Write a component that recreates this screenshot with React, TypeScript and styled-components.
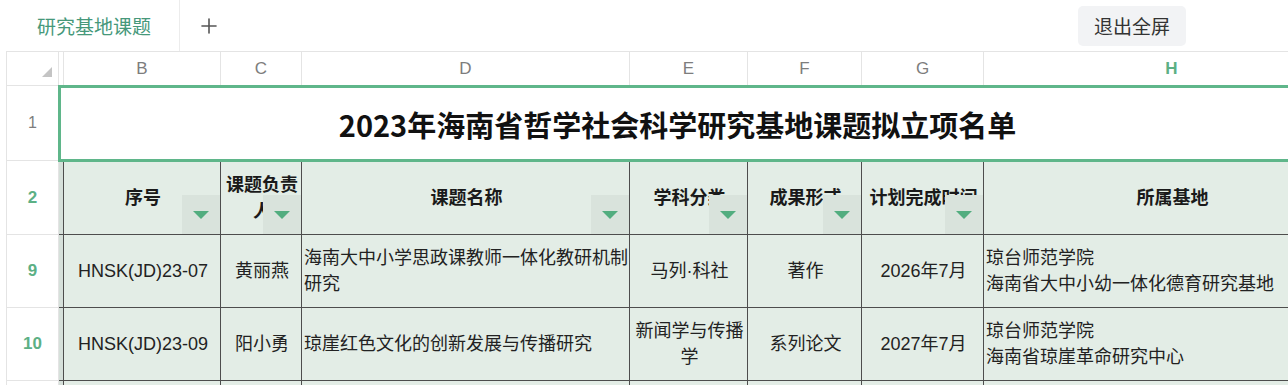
import React from 'react';
import styled, { createGlobalStyle, css } from 'styled-components';
import { Plus } from 'lucide-react';

const GlobalStyle = createGlobalStyle`
  html, body {
    margin: 0;
    padding: 0;
    background: #ffffff;
    overflow: hidden;
  }
  body {
    font-family: "Liberation Sans", "Noto Sans CJK SC", sans-serif;
    color: #222;
  }
  * {
    box-sizing: border-box;
  }
`;

const COLS = [52, 5, 157, 81, 328, 118, 114, 122, 376];

const Page = styled.div`
  width: 1288px;
  height: 385px;
  overflow: hidden;
`;

// Top bar with the sheet tab and the exit button
const TabBar = styled.div`
  height: 51px;
  display: flex;
  align-items: center;
`;

const Tab = styled.div`
  width: 180px;
  height: 100%;
  display: flex;
  align-items: center;
  padding-left: 37px;
  font-size: 19px;
  color: #46987a;
  border-right: 1px solid #ececec;
`;

const AddButton = styled.div`
  width: 58px;
  height: 100%;
  display: flex;
  align-items: center;
  justify-content: center;
  color: #555;
`;

const Spacer = styled.div`
  flex: 1;
`;

const ExitButton = styled.div`
  width: 108px;
  height: 40px;
  margin-right: 102px;
  border-radius: 5px;
  background: #f2f3f5;
  color: #333;
  font-size: 19px;
  display: flex;
  align-items: center;
  justify-content: center;
`;

// Spreadsheet area
const SheetViewport = styled.div`
  margin-left: 6px;
  border-top: 1px solid #e4e4e4;
  border-left: 1px solid #e4e4e4;
  overflow: hidden;
  height: 334px;
`;

const Grid = styled.div`
  display: grid;
  grid-template-columns: ${COLS.map((c) => `${c}px`).join(' ')};
  grid-template-rows: 34px 75px 74px 73px 73px 74px;
  width: ${COLS.reduce((a, b) => a + b, 0)}px;
`;

const Corner = styled.div`
  position: relative;
  border-right: 1px solid #e4e4e4;
  border-bottom: 1px solid #e4e4e4;

  &::after {
    content: '';
    position: absolute;
    right: 6px;
    bottom: 8px;
    width: 0;
    height: 0;
    border-left: 10px solid transparent;
    border-bottom: 10px solid #c4c4c4;
  }
`;

const ColHead = styled.div<{ $active?: boolean }>`
  display: flex;
  align-items: center;
  justify-content: center;
  font-size: 17px;
  color: #7d7d7d;
  border-right: 1px solid #e4e4e4;
  border-bottom: 1px solid #e4e4e4;
  ${(p) =>
    p.$active &&
    css`
      color: #5cb085;
      font-weight: bold;
    `}
`;

const RowHead = styled.div<{ $active?: boolean }>`
  display: flex;
  align-items: center;
  justify-content: center;
  font-size: 16px;
  color: #7d7d7d;
  border-right: 1px solid #e4e4e4;
  border-bottom: 1px solid #e4e4e4;
  ${(p) =>
    p.$active &&
    css`
      color: #5cb085;
      font-weight: bold;
      font-size: 17px;
    `}
`;

const HiddenCol = styled.div`
  background: #d6e0da;
  border-right: 1px solid #4d4d4d;
  border-bottom: 1px solid #4d4d4d;
`;

const TitleCell = styled.div`
  grid-column: 2 / -1;
  position: relative;
  z-index: 1;
  display: flex;
  align-items: center;
  justify-content: center;
  padding-right: 64px;
  background: #fff;
  font-family: "Noto Sans CJK SC", "Liberation Sans", sans-serif;
  font-size: 29px;
  font-weight: bold;
  color: #111;
  box-shadow: 0 0 0 1px #5fb68a, inset 0 0 0 2px #5fb68a;
`;

const Cell = styled.div<{ $align?: 'left' | 'center'; $header?: boolean }>`
  position: relative;
  display: flex;
  align-items: center;
  justify-content: ${(p) => (p.$align === 'left' ? 'flex-start' : 'center')};
  text-align: ${(p) => (p.$align === 'left' ? 'left' : 'center')};
  padding: 0 0 0 2px;
  background: #e3ede6;
  border-right: 1px solid #4d4d4d;
  border-bottom: 1px solid #4d4d4d;
  font-size: 18px;
  line-height: 26px;
  color: #222;
  word-break: break-all;
  overflow: hidden;
  ${(p) =>
    p.$header &&
    css`
      font-weight: bold;
      color: #1a1a1a;
    `}
`;

const FilterButton = styled.div`
  position: absolute;
  right: 0;
  bottom: 0;
  width: 38px;
  height: 39px;
  background: #d9e3dc;
  display: flex;
  align-items: center;
  justify-content: center;

  &::after {
    content: '';
    width: 0;
    height: 0;
    border-left: 8px solid transparent;
    border-right: 8px solid transparent;
    border-top: 8px solid #52ad7f;
  }
`;

type Align = 'left' | 'center';

const headers: { label: string; filter: boolean }[] = [
  { label: '序号', filter: true },
  { label: '课题负责人', filter: true },
  { label: '课题名称', filter: true },
  { label: '学科分类', filter: true },
  { label: '成果形式', filter: true },
  { label: '计划完成时间', filter: true },
  { label: '所属基地', filter: false },
];

const aligns: Align[] = ['center', 'center', 'left', 'center', 'center', 'center', 'left'];

const rows: { num: string; cells: string[][] }[] = [
  {
    num: '9',
    cells: [
      ['HNSK(JD)23-07'],
      ['黄丽燕'],
      ['海南大中小学思政课教师一体化教研机制研究'],
      ['马列·科社'],
      ['著作'],
      ['2026年7月'],
      ['琼台师范学院', '海南省大中小幼一体化德育研究基地'],
    ],
  },
  {
    num: '10',
    cells: [
      ['HNSK(JD)23-09'],
      ['阳小勇'],
      ['琼崖红色文化的创新发展与传播研究'],
      ['新闻学与传播学'],
      ['系列论文'],
      ['2027年7月'],
      ['琼台师范学院', '海南省琼崖革命研究中心'],
    ],
  },
];

const letters = ['B', 'C', 'D', 'E', 'F', 'G', 'H'];

export default function App() {
  return (
    <Page>
      <GlobalStyle />
      <TabBar>
        <Tab>研究基地课题</Tab>
        <AddButton>
          <Plus size={24} strokeWidth={1.6} />
        </AddButton>
        <Spacer />
        <ExitButton>退出全屏</ExitButton>
      </TabBar>

      <SheetViewport>
        <Grid>
          {/* column letters */}
          <Corner />
          <ColHead />
          {letters.map((l) => (
            <ColHead key={l} $active={l === 'H'}>
              {l}
            </ColHead>
          ))}

          {/* row 1: title */}
          <RowHead>1</RowHead>
          <TitleCell>2023年海南省哲学社会科学研究基地课题拟立项名单</TitleCell>

          {/* row 2: headers */}
          <RowHead $active>2</RowHead>
          <HiddenCol />
          {headers.map((h) => (
            <Cell key={h.label} $header>
              <span>{h.label}</span>
              {h.filter && <FilterButton />}
            </Cell>
          ))}

          {rows.map((r) => (
            <React.Fragment key={r.num}>
              <RowHead $active>{r.num}</RowHead>
              <HiddenCol />
              {r.cells.map((lines, i) => (
                <Cell key={i} $align={aligns[i]}>
                  <div>
                    {lines.map((line) => (
                      <div key={line}>{line}</div>
                    ))}
                  </div>
                </Cell>
              ))}
            </React.Fragment>
          ))}

          {/* next row, cut off by the window */}
          <RowHead />
          <HiddenCol />
          {letters.map((l) => (
            <Cell key={`x-${l}`} />
          ))}
        </Grid>
      </SheetViewport>
    </Page>
  );
}
